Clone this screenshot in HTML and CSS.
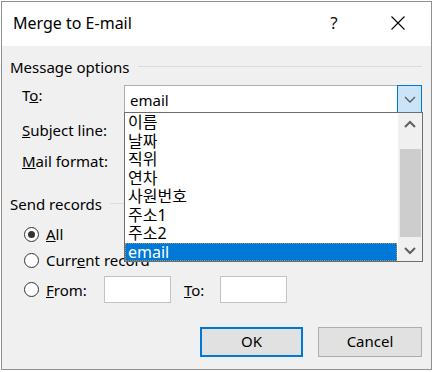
FILE: index.html
```html
<!DOCTYPE html>
<html lang="en">
<head>
    <meta charset="UTF-8">
    <meta name="viewport" content="width=device-width, initial-scale=1.0">
    <link rel="stylesheet" href="styles.css">
</head>
<body>
    <div class="dialog">
        <div class="titlebar">
            <span class="title">Merge to E-mail</span>
            <span class="title-btn help">?</span>
            <span class="title-btn close">
                <svg width="14" height="14" viewBox="0 0 14 14"><path d="M0.5 0.5 L13.5 13.5 M13.5 0.5 L0.5 13.5" stroke="#000" stroke-width="1.1" fill="none"/></svg>
            </span>
        </div>
        <div class="content">
            <div class="group-title">Message options</div>

            <div class="field field-to">
                <label>T<u>o</u>:</label>
                <div class="combo-wrap">
                    <div class="combo">
                        <span class="combo-value">email</span>
                        <span class="combo-btn">
                            <svg width="12" height="7" viewBox="0 0 12 7"><polyline points="1,1 6,6 11,1" stroke="#5a5a5a" stroke-width="1.3" fill="none"/></svg>
                        </span>
                    </div>
                    <div class="dropdown">
                        <ul class="items">
                            <li>이름</li>
                            <li>날짜</li>
                            <li>직위</li>
                            <li>연차</li>
                            <li>사원번호</li>
                            <li>주소1</li>
                            <li>주소2</li>
                            <li class="selected">email</li>
                        </ul>
                        <div class="scrollbar">
                            <span class="sb-arrow">
                                <svg width="12" height="8" viewBox="0 0 12 8"><polyline points="1,7 6,2 11,7" stroke="#606060" stroke-width="2" fill="none"/></svg>
                            </span>
                            <div class="sb-track"><div class="sb-thumb"></div></div>
                            <span class="sb-arrow">
                                <svg width="12" height="8" viewBox="0 0 12 8"><polyline points="1,1 6,6 11,1" stroke="#606060" stroke-width="2" fill="none"/></svg>
                            </span>
                        </div>
                    </div>
                </div>
            </div>

            <div class="field field-sub">
                <label><u>S</u>ubject line:</label>
                <input type="text" class="textbox wide">
            </div>

            <div class="field field-mail">
                <label><u>M</u>ail format:</label>
                <div class="combo"></div>
            </div>

            <div class="group-title group-send">Send records</div>

            <div class="radio-row row-all">
                <span class="radio checked"></span>
                <span class="radio-label"><u>A</u>ll</span>
            </div>
            <div class="radio-row row-current">
                <span class="radio"></span>
                <span class="radio-label">Curr<u>e</u>nt record</span>
            </div>
            <div class="radio-row row-from">
                <span class="radio"></span>
                <span class="radio-label from-label"><u>F</u>rom:</span>
                <input type="text" class="textbox small">
                <span class="to-label"><u>T</u>o:</span>
                <input type="text" class="textbox small">
            </div>

            <div class="buttons">
                <button type="button" class="btn btn-ok">OK</button>
                <button type="button" class="btn">Cancel</button>
            </div>
        </div>
    </div>
</body>
</html>
```

FILE: styles.css
```css
body {
    margin: 0;
    background: #ffffff;
    font-family: "Noto Sans", "Noto Sans CJK KR", sans-serif;
    font-size: 15px;
    color: #000;
}
.dialog {
    box-sizing: border-box;
    margin: 1px 0 0 1px;
    width: 431px;
    height: 369px;
    border: 1px solid #8f8f8f;
    background: #f0f0f0;
    display: flex;
    flex-direction: column;
}
.titlebar {
    height: 44px;
    background: #ffffff;
    display: flex;
    align-items: center;
    padding-left: 11px;
    padding-right: 10px;
}
.title {
    flex: 1;
    font-size: 16px;
    padding-bottom: 2px;
}
.title-btn {
    width: 46px;
    display: flex;
    justify-content: center;
    align-items: center;
}
.help {
    font-size: 17px;
    margin-right: 18px;
    padding-bottom: 3px;
    color: #111;
}
.close {
    padding-bottom: 2px;
}
.content {
    flex: 1;
    display: flex;
    flex-direction: column;
}
.group-title {
    display: flex;
    align-items: center;
    height: 20px;
    line-height: 20px;
    margin-top: 11px;
    padding-left: 8px;
}
.group-title::after {
    content: "";
    flex: 1;
    height: 1px;
    background: #dcdcdc;
    margin: 0 9px 0 8px;
    position: relative;
    top: -1px;
}
.group-send {
    margin-top: 19px;
}
.field {
    display: flex;
    align-items: flex-start;
    height: 28px;
    padding-left: 20px;
}
.field label {
    width: 102px;
    line-height: 20px;
}
.field-to {
    margin-top: 8px;
    position: relative;
    z-index: 2;
}
.field-sub,
.field-mail {
    margin-top: 3px;
}
.field-sub label,
.field-mail label {
    padding-top: 4px;
}
.combo-wrap {
    position: relative;
}
.combo {
    box-sizing: border-box;
    width: 298px;
    height: 28px;
    border: 1px solid #adadad;
    background: #fff;
    display: flex;
}
.combo-value {
    flex: 1;
    padding-left: 5px;
    line-height: 26px;
    padding-top: 1px;
}
.combo-btn {
    box-sizing: border-box;
    width: 25px;
    height: 28px;
    margin: -1px -1px 0 0;
    border: 1px solid #0078d7;
    background: #cce4f7;
    display: flex;
    align-items: center;
    justify-content: center;
}
.dropdown {
    position: absolute;
    top: 27px;
    left: 0;
    box-sizing: border-box;
    width: 299px;
    height: 150px;
    border: 1px solid #6e6e6e;
    background: #fff;
    display: flex;
}
.items {
    list-style: none;
    margin: 0;
    padding: 0;
    flex: 1;
    font-size: 16px;
}
.items li {
    height: 18.5px;
    line-height: 18px;
    padding-left: 3px;
    margin-right: 1px;
}
.items li.selected {
    background: #0078d7;
    color: #fff;
    outline: 1px dotted #a8926a;
    outline-offset: -1px;
}
.scrollbar {
    width: 24px;
    background: #f0f0f0;
    display: flex;
    flex-direction: column;
}
.sb-arrow {
    height: 21px;
    display: flex;
    align-items: center;
    justify-content: center;
}
.sb-track {
    flex: 1;
}
.sb-thumb {
    margin: 15px 1px 0 2px;
    height: 88px;
    background: #cdcdcd;
}
.textbox {
    box-sizing: border-box;
    height: 27px;
    border: 1px solid #c3c3c3;
    background: #fff;
    padding: 0;
    margin: 0;
}
.textbox.wide {
    width: 298px;
}
.textbox.small {
    width: 67px;
}
.radio-row {
    display: flex;
    align-items: center;
    height: 20px;
    padding-left: 22px;
}
.row-all {
    margin-top: 10px;
}
.row-current {
    margin-top: 6px;
}
.row-from {
    margin-top: 6px;
    height: 27px;
}
.radio {
    box-sizing: border-box;
    width: 15px;
    height: 15px;
    border: 1px solid #333;
    border-radius: 50%;
    background: #fff;
    display: flex;
    align-items: center;
    justify-content: center;
}
.radio.checked::after {
    content: "";
    width: 7px;
    height: 7px;
    border-radius: 50%;
    background: #333;
}
.radio-label {
    margin-left: 7px;
    line-height: 20px;
}
.from-label {
    width: 58px;
}
.to-label {
    margin-left: 13px;
    width: 36px;
}
.buttons {
    display: flex;
    justify-content: flex-end;
    gap: 15px;
    padding-right: 9px;
    margin-top: 24px;
}
.btn {
    box-sizing: border-box;
    width: 104px;
    height: 30px;
    border: 1px solid #adadad;
    background: #e1e1e1;
    font-family: "Noto Sans", sans-serif;
    font-size: 15px;
    color: #000;
    padding: 0 0 2px;
}
.btn-ok {
    width: 103px;
    border: 2px solid #0078d7;
}
```
